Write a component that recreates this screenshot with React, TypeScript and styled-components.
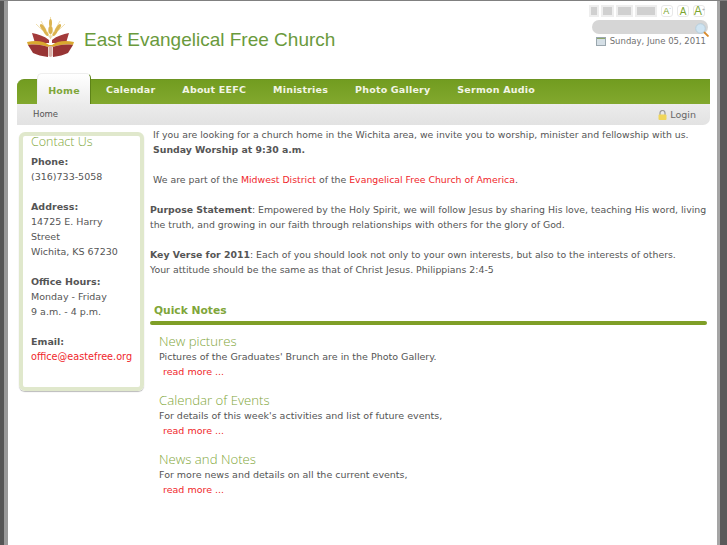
import React from 'react'
import styled, { createGlobalStyle } from 'styled-components'

const GlobalStyle = createGlobalStyle`
  html, body {
    margin: 0;
    padding: 0;
    background: #fff;
    overflow: hidden;
  }
  body {
    font-family: 'DejaVu Sans', Verdana, sans-serif;
    font-size: 9.5px;
    line-height: 15px;
    color: #555;
  }
`

const navItems = ['Calendar', 'About EEFC', 'Ministries', 'Photo Gallery', 'Sermon Audio']

const notes = [
  { title: 'New pictures', text: "Pictures of the Graduates' Brunch are in the Photo Gallery." },
  { title: 'Calendar of Events', text: "For details of this week's activities and list of future events," },
  { title: 'News and Notes', text: 'For more news and details on all the current events,' },
]

const BookLogo = () => (
  <svg width="47" height="41" viewBox="0 0 47 41">
    <g stroke="#ecd79a" strokeWidth="0.8" fill="none">
      <path d="M23.500 1v22M23.500 22L9 8M23.500 22L38 8M23.500 22L14 5M23.500 22L33 5" />
    </g>
    <g fill="#dcb350">
      <ellipse cx="23.500" cy="7" rx="1.500" ry="4" />
      <ellipse cx="23.500" cy="14" rx="2.200" ry="4" />
      <ellipse cx="16" cy="12" rx="1.800" ry="4.500" transform="rotate(-35 16 12)" />
      <ellipse cx="31" cy="12" rx="1.800" ry="4.500" transform="rotate(35 31 12)" />
      <ellipse cx="19" cy="17" rx="1.500" ry="3.500" transform="rotate(-35 19 17)" />
      <ellipse cx="28" cy="17" rx="1.500" ry="3.500" transform="rotate(35 28 17)" />
    </g>
    <path d="M5 17c6 1 12 3 17 7v3H8zM42 17c-6 1-12 3-17 7v3h14z" fill="#a33a3a" />
    <path d="M0 26c9-2 17-1 22 3h3c5-4 13-5 22-3l-1 3c-8-1-15 0-20 2h-5c-5-2-12-3-20-2z" fill="#d9a82f" />
    <path d="M1 29c8-1 15 0 20 2v10c-6-1-11-2-15-4zM46 29c-8-1-15 0-20 2v10c6-1 11-2 15-4z" fill="#973434" />
    <path d="M21.500 30h4v10l-2 1-2-1z" fill="#d9b0a8" />
  </svg>
)

const CalendarIcon = () => (
  <svg width="10" height="9" viewBox="0 0 10 9">
    <rect x="0" y="0" width="10" height="9" fill="#d5dfe6" />
    <rect x="0" y="0" width="10" height="2" fill="#8fa86a" />
    <rect x="0.500" y="0.500" width="9" height="8" fill="none" stroke="#9aa7ae" />
  </svg>
)

const SearchIcon = () => (
  <svg width="14" height="14" viewBox="0 0 14 14">
    <path d="M8.500 8.500l5 5" stroke="#d98a2b" strokeWidth="1.800" />
    <circle cx="5.500" cy="5.500" r="4.800" fill="#cfe4f2" stroke="#b7cdda" />
  </svg>
)

const LockIcon = () => (
  <svg width="9" height="10" viewBox="0 0 9 10">
    <path d="M2 5V3a2.500 2.500 0 0 1 5 0v2" fill="none" stroke="#9a9a9a" strokeWidth="1.200" />
    <rect x="0.500" y="4.500" width="8" height="5.500" rx="1" fill="#f0d65a" />
  </svg>
)

const App = () => (
  <Page>
    <GlobalStyle />
    <Header>
      <Brand>
        <BookLogo />
        <SiteName>East Evangelical Free Church</SiteName>
      </Brand>
      <Tools>
        <ToolRow>
          <WidthSwatch $w={6} />
          <WidthSwatch $w={9} />
          <WidthSwatch $w={13} />
          <WidthSwatch $w={18} />
          <FontSizeButton $size={9}>
            A<SizeMark>-</SizeMark>
          </FontSizeButton>
          <FontSizeButton $size={10}>A</FontSizeButton>
          <FontSizeButton $size={12}>
            A<SizeMark>+</SizeMark>
          </FontSizeButton>
        </ToolRow>
        <SearchBox>
          <SearchGlyph>
            <SearchIcon />
          </SearchGlyph>
        </SearchBox>
        <DateLine>
          <CalendarIcon />
          Sunday, June 05, 2011
        </DateLine>
      </Tools>
    </Header>

    <Nav>
      <ActiveTab>Home</ActiveTab>
      {navItems.map((item) => (
        <NavItem key={item}>{item}</NavItem>
      ))}
    </Nav>
    <Breadcrumb>
      <span>Home</span>
      <LoginLink>
        <LockIcon />
        Login
      </LoginLink>
    </Breadcrumb>

    <Columns>
      <Sidebar>
        <SidebarTitle>Contact Us</SidebarTitle>
        <Label>Phone:</Label>
        <div>(316)733-5058</div>
        <Gap />
        <Label>Address:</Label>
        <div>14725 E. Harry</div>
        <div>Street</div>
        <div>Wichita, KS 67230</div>
        <Gap />
        <Label>Office Hours:</Label>
        <div>Monday - Friday</div>
        <div>9 a.m. - 4 p.m.</div>
        <Gap />
        <Label>Email:</Label>
        <SidebarEmail>office@eastefree.org</SidebarEmail>
      </Sidebar>

      <Main>
        <Intro>
          <Indented>
            If you are looking for a church home in the Wichita area, we invite you to worship, minister and fellowship with us.
            <br />
            <b>Sunday Worship at 9:30 a.m.</b>
          </Indented>
          <Gap />
          <Indented>
            We are part of the <RedLink>Midwest District</RedLink> of the{' '}
            <RedLink>Evangelical Free Church of America</RedLink>.
          </Indented>
          <Gap />
          <Paragraph>
            <b>Purpose Statement</b>: Empowered by the Holy Spirit, we will follow Jesus by sharing His love, teaching His word, living the truth, and growing in our faith through relationships with others for the glory of God.
          </Paragraph>
          <Gap />
          <Paragraph>
            <b>Key Verse for 2011</b>: Each of you should look not only to your own interests, but also to the interests of others.
            <br />
            Your attitude should be the same as that of Christ Jesus. Philippians 2:4-5
          </Paragraph>
        </Intro>

        <NotesHeading>Quick Notes</NotesHeading>
        <NotesRule />
        {notes.map((note) => (
          <Note key={note.title}>
            <NoteTitle>{note.title}</NoteTitle>
            <div>{note.text}</div>
            <ReadMore>read more ...</ReadMore>
          </Note>
        ))}
      </Main>
    </Columns>
  </Page>
)

const Page = styled.div`
  box-sizing: border-box;
  width: 727px;
  height: 545px;
  overflow: hidden;
  padding: 0 17px;
  border-top: 1px solid #808080;
  background:
    linear-gradient(90deg, #555 4px, #999 4px, #999 8px, transparent 8px),
    linear-gradient(270deg, #5a5a5a 7px, #a5a5a5 7px, #a5a5a5 10px, transparent 10px),
    #fff;
`

const Header = styled.header`
  display: flex;
  justify-content: space-between;
  height: 78px;
`

const Brand = styled.div`
  display: flex;
  align-items: flex-start;
  gap: 10px;
  padding: 15px 0 0 10px;
`

const SiteName = styled.div`
  margin-top: 12px;
  font-family: 'Liberation Sans', Arial, sans-serif;
  font-size: 19px;
  line-height: 24px;
  color: #6a9a3c;
`

const Tools = styled.div`
  display: flex;
  flex-direction: column;
  align-items: flex-end;
  padding: 4px 2px 0 0;
`

const ToolRow = styled.div`
  display: flex;
  align-items: center;
  gap: 2px;
  height: 12px;
  margin-right: 3px;
`

const WidthSwatch = styled.div<{ $w: number }>`
  width: ${(p) => p.$w}px;
  height: 8px;
  background: #d0d0d0;
  border: 2px solid #eeeeee;
`

const FontSizeButton = styled.div<{ $size: number }>`
  width: 10px;
  height: 10px;
  margin-left: 2px;
  border: 1px solid #e8e8e8;
  border-radius: 3px;
  font-family: 'Liberation Sans', Arial, sans-serif;
  font-size: ${(p) => p.$size}px;
  line-height: 11px;
  text-align: center;
  white-space: nowrap;
  color: #7ba52e;
`

const SizeMark = styled.sup`
  font-size: 5px;
  line-height: 0;
  vertical-align: 4px;
  color: #999;
`

const SearchBox = styled.div`
  position: relative;
  width: 116px;
  height: 14px;
  margin-top: 3px;
  border-radius: 7px;
  background: #d6d6d6;
`

const SearchGlyph = styled.span`
  position: absolute;
  right: -1px;
  top: 3px;
`

const DateLine = styled.div`
  display: flex;
  align-items: center;
  gap: 4px;
  margin: 1px 2px 0 0;
  font-size: 8.500px;
  line-height: 13px;
  color: #707070;
`

const Nav = styled.nav`
  display: flex;
  align-items: stretch;
  width: 693px;
  height: 25px;
  padding-left: 20px;
  box-sizing: border-box;
  border-radius: 7px 0 0 0;
  border-top: 1px solid #6d9423;
  background: linear-gradient(#729c20, #82a82e);
`

const ActiveTab = styled.div`
  box-sizing: border-box;
  width: 54px;
  height: 31px;
  margin-top: -7px;
  border: 1px solid #eeeeee;
  border-bottom: 0;
  border-right: 1px solid #5d8218;
  border-radius: 5px 5px 0 0;
  background: linear-gradient(#fff, #ececec);
  text-align: center;
  font-weight: bold;
  font-size: 9.500px;
  line-height: 33px;
  letter-spacing: 0.2px;
  color: #7fa63a;
`

const NavItem = styled.div`
  margin-left: 15px;
  margin-right: 12px;
  font-weight: bold;
  font-size: 9.500px;
  line-height: 20px;
  letter-spacing: 0.2px;
  color: #f2f5e6;
`

const Breadcrumb = styled.div`
  display: flex;
  justify-content: space-between;
  align-items: center;
  box-sizing: border-box;
  width: 693px;
  height: 21px;
  padding: 0 14px 0 16px;
  border-radius: 0 0 7px 0;
  background: linear-gradient(#ececec, #e2e2e2);
  font-size: 8.500px;
  color: #555;
`

const LoginLink = styled.span`
  display: flex;
  align-items: center;
  gap: 3px;
  font-size: 9.500px;
  color: #666;
`

const Columns = styled.div`
  display: flex;
  align-items: flex-start;
  gap: 6px;
  padding: 2px 0 0 2px;
`

const Sidebar = styled.aside`
  flex: none;
  box-sizing: border-box;
  width: 125px;
  height: 259px;
  margin-top: 5px;
  padding: 0 4px 0 8px;
  border: 4px solid #e0e8cc;
  border-radius: 6px;
  box-shadow: 0 1px 1px #bbb;
  overflow: hidden;
  white-space: nowrap;
`

const SidebarTitle = styled.div`
  margin: -1px 0 5px;
  font-family: 'Open Sans', sans-serif;
  font-weight: 300;
  font-size: 12.500px;
  line-height: 14px;
  color: #7fa63a;
`

const Label = styled.b`
  display: block;
`

const Main = styled.main`
  width: 557px;
`

const Intro = styled.div`
  font-size: 9.350px;
`

const Gap = styled.div`
  height: 15px;
`

const Paragraph = styled.p`
  margin: 0;
`

const Indented = styled(Paragraph)`
  padding-left: 3px;
`

const RedLink = styled.span`
  color: #f01f2c;
`

const SidebarEmail = styled(RedLink)`
  font-size: 9.700px;
`

const NotesHeading = styled.h2`
  margin: 26px 0 0 4px;
  font-size: 10.700px;
  line-height: 15px;
  font-weight: bold;
  color: #7fa63a;
`

const NotesRule = styled.div`
  height: 4px;
  margin-top: 3px;
  border-radius: 2px;
  background: #7f9f27;
`

const Note = styled.section`
  margin: 8px 0 0 9px;
  & + & {
    margin-top: 12px;
  }
`

const NoteTitle = styled.h3`
  margin: 0;
  font-family: 'Open Sans', sans-serif;
  font-weight: 300;
  font-size: 13.200px;
  line-height: 16px;
  color: #7fa63a;
`

const ReadMore = styled(RedLink)`
  display: block;
  margin-left: 4px;
  line-height: 16px;
`

export default App
